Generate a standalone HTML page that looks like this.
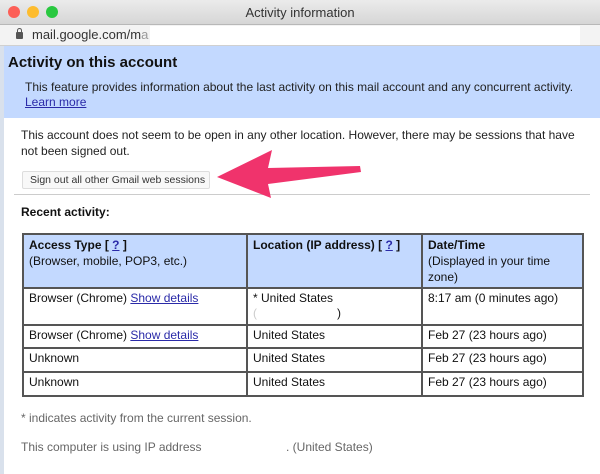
<!DOCTYPE html>
<html><head><style>
*{margin:0;padding:0;box-sizing:border-box}
body{width:600px;height:474px;overflow:hidden;background:#fff;font-family:"Liberation Sans",Arial,sans-serif;position:relative;color:#111}
.a{position:absolute;white-space:nowrap}
#tb{position:absolute;left:0;top:0;width:600px;height:25px;background:linear-gradient(#ebebeb,#d6d6d6);border-bottom:1px solid #b8b8b8}
.dot{position:absolute;top:6px;width:12px;height:12px;border-radius:50%}
#ab{position:absolute;left:0;top:25px;width:600px;height:21px;background:#f3f3f3;border-bottom:1px solid #d0d0d0}
#blue{position:absolute;left:4px;top:46px;width:596px;height:72px;background:#c3d9ff}
#frame{position:absolute;left:0;top:46px;width:4px;height:428px;background:#d9e1ec}
table{position:absolute;left:22px;top:233px;width:562px;border-collapse:collapse;font-size:12px;table-layout:fixed}
td{border:2px solid #555;padding:2px 5px;vertical-align:top;line-height:15px}
th{border:2px solid #555;padding:2px 5px;vertical-align:top;text-align:left;background:#c3d9ff;font-weight:normal;line-height:16px}
a{color:#2a2aa8;text-decoration:underline}
</style></head><body>
<div id="tb">
<div class="dot" style="left:8px;background:#fc5f57"></div>
<div class="dot" style="left:27px;background:#fdbc2e"></div>
<div class="dot" style="left:46px;background:#29c840"></div>
<div class="a" style="left:0;width:600px;text-align:center;top:5px;font-size:13px;color:#333">Activity information</div>
</div>
<div id="ab">
<div class="a" style="left:16px;top:7px;width:7px;height:7px;background:#555;border-radius:1px"></div>
<div class="a" style="left:17px;top:3px;width:5px;height:5px;border:1.5px solid #555;border-bottom:none;border-radius:3px 3px 0 0"></div>
<div class="a" style="left:32px;top:2px;font-size:13px;color:#333">mail.google.com/m<span style="color:#999">a</span></div>
<div class="a" style="left:150px;top:1px;width:430px;height:19px;background:#fff"></div>
</div>
<div id="frame"></div>
<div id="blue">
<div class="a" style="left:4px;top:8px;font-size:15px;font-weight:bold">Activity on this account</div>
<div class="a" style="left:21px;top:34px;font-size:12px;color:#222">This feature provides information about the last activity on this mail account and any concurrent activity.</div>
<div class="a" style="left:21px;top:49px;font-size:12px"><a>Learn more</a></div>
</div>
<div class="a" style="left:21px;top:127px;font-size:12px;color:#222;line-height:16px">This account does not seem to be open in any other location. However, there may be sessions that have<br>not been signed out.</div>
<div class="a" style="left:22px;top:171px;width:188px;height:18px;border:1px solid #ddd;border-radius:2px;background:#f8f8f8;font-size:10.5px;color:#333;padding:2px 0 0 7px">Sign out all other Gmail web sessions</div>
<div class="a" style="left:14px;top:194px;width:576px;height:1px;background:#ccc"></div>
<svg class="a" style="left:0;top:0" width="600" height="474"><path d="M217 177 L272 150 L268 168 L360 166 L361 172 L268 184 L271 198 Z" fill="#f0336c"/></svg>
<div class="a" style="left:21px;top:205px;font-size:12px;font-weight:bold">Recent activity:</div>
<table>
<colgroup><col style="width:224px"><col style="width:175px"><col></colgroup>
<tr style="height:54px"><th><b>Access Type [ <a>?</a> ]</b><br>(Browser, mobile, POP3, etc.)</th><th><b>Location (IP address) [ <a>?</a> ]</b></th><th><b>Date/Time</b><br>(Displayed in your time<br>zone)</th></tr>
<tr style="height:37px"><td>Browser (Chrome) <a>Show details</a></td><td>* United States<br><span style="color:#ccc">(</span><span style="padding-left:80px">)</span></td><td>8:17 am (0 minutes ago)</td></tr>
<tr style="height:23px"><td>Browser (Chrome) <a>Show details</a></td><td>United States</td><td>Feb 27 (23 hours ago)</td></tr>
<tr style="height:24px"><td>Unknown</td><td>United States</td><td>Feb 27 (23 hours ago)</td></tr>
<tr style="height:24px"><td>Unknown</td><td>United States</td><td>Feb 27 (23 hours ago)</td></tr>
</table>
<div class="a" style="left:21px;top:411px;font-size:12px;color:#666">* indicates activity from the current session.</div>
<div class="a" style="left:21px;top:440px;font-size:12px;color:#666">This computer is using IP address</div>
<div class="a" style="left:286px;top:440px;font-size:12px;color:#666">. (United States)</div>
</body></html>
